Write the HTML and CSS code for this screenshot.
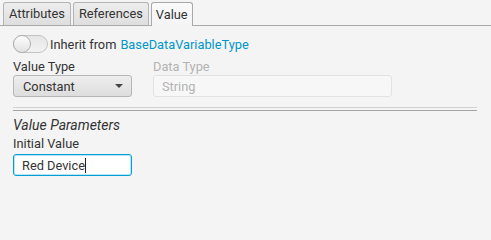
FILE: index.html
```html
<!DOCTYPE html>
<html lang="en">
<head>
  <meta charset="utf-8">
  <title>Value</title>
  <link rel="stylesheet" href="styles.css">
</head>
<body>
  <div class="tab-bar">
    <div class="tab">Attributes</div>
    <div class="tab">References</div>
    <div class="tab selected">Value</div>
  </div>

  <div class="content">
    <div class="toggle-row">
      <span class="toggle"><span class="thumb"></span></span>
      <span class="toggle-label">Inherit from</span>
      <a class="link">BaseDataVariableType</a>
    </div>

    <div class="field-row">
      <div class="field">
        <div class="label">Value Type</div>
        <div class="combo">
          <span>Constant</span>
          <span class="arrow"></span>
        </div>
      </div>
      <div class="field disabled">
        <div class="label">Data Type</div>
        <div class="text-box wide">String</div>
      </div>
    </div>

    <div class="separator"></div>

    <div class="section-title">Value Parameters</div>
    <div class="label initial">Initial Value</div>
    <div class="text-box focused">Red Device<span class="caret"></span></div>
  </div>
</body>
</html>
```

FILE: styles.css
```css
body {
  margin: 0;
  background: #f4f4f4;
  font-family: Roboto, "Liberation Sans", sans-serif;
  font-size: 12.8px;
  color: #333333;
}

/* tabs */
.tab-bar {
  display: flex;
  gap: 2px;
  height: 23px;
  padding: 2px 0 0 3px;
  border-bottom: 1px solid #a9a9a9;
}

.tab {
  display: flex;
  align-items: center;
  padding: 0 5px;
  height: 22px;
  border: 1px solid #b4b4b4;
  border-bottom: none;
  border-radius: 3px 3px 0 0;
  background: linear-gradient(#ededed, #dedede);
  line-height: 16px;
}

.tab.selected {
  height: 23px;
  margin-bottom: -1px;
  padding: 0 4px;
  border-color: #a9a9a9;
  background: linear-gradient(#fafafa, #f4f4f4);
}

.content {
  padding: 9px 14px 0 13px;
}

/* toggle */
.toggle-row {
  display: flex;
  align-items: center;
  height: 18px;
}

.toggle {
  position: relative;
  box-sizing: border-box;
  width: 35px;
  height: 18px;
  border: 1px solid #c4c4c4;
  border-radius: 9px;
  background: linear-gradient(#e6e6e6, #f2f2f2);
  margin-right: 2px;
}

.toggle .thumb {
  position: absolute;
  left: -1px;
  top: -1px;
  box-sizing: border-box;
  width: 18px;
  height: 18px;
  border: 1px solid #b0b0b0;
  border-radius: 50%;
  background: linear-gradient(#fdfdfd, #e2e2e2);
}

.toggle-label {
  margin-right: 4px;
}

.link {
  color: #0096c9;
}

/* fields */
.field-row {
  display: flex;
  gap: 21px;
  margin-top: 6px;
}

.label {
  line-height: 16px;
  height: 16px;
}

.combo {
  display: flex;
  align-items: center;
  justify-content: space-between;
  box-sizing: border-box;
  width: 119px;
  height: 22px;
  padding: 0 8px 0 9px;
  border: 1px solid #b6b6b6;
  border-radius: 3px;
  background: linear-gradient(#eeeeee, #dddddd);
}

.arrow {
  width: 0;
  height: 0;
  border-left: 4px solid transparent;
  border-right: 4px solid transparent;
  border-top: 4px solid #444444;
}

.text-box {
  display: flex;
  align-items: center;
  box-sizing: border-box;
  width: 119px;
  height: 22px;
  padding: 0 8px;
  border: 1px solid #c2c2c2;
  border-radius: 3px;
  background: #ffffff;
}

.text-box.wide {
  width: 239px;
}

.disabled .label {
  color: #b3b3b3;
}

.disabled .text-box {
  border-color: #e2e2e2;
  background: #f7f7f7;
  color: #b3b3b3;
}

.separator {
  box-sizing: border-box;
  height: 4px;
  margin-top: 10px;
  border-top: 1px solid #d2d2d2;
  border-bottom: 1px solid #a6a6a6;
}

.section-title {
  font-style: italic;
  font-size: 14px;
  line-height: 16px;
  margin-top: 6px;
}

.label.initial {
  margin-top: 3px;
}

.text-box.focused {
  margin-top: 2px;
  border-color: #039ed3;
  box-shadow: inset 0 0 0 1px #b9e4f4;
}

.caret {
  display: inline-block;
  width: 1px;
  height: 15px;
  background: #222222;
}
```
